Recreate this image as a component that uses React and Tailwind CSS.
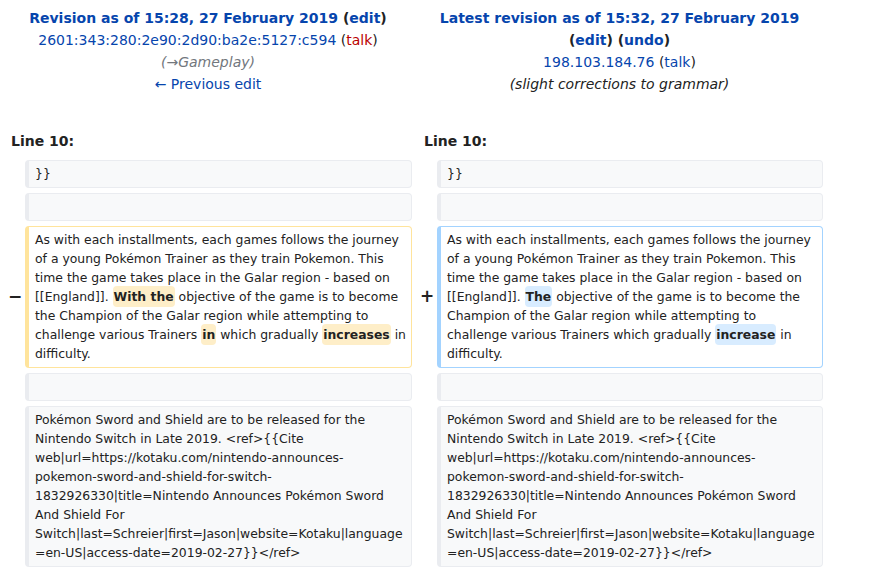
import React from 'react';

const Hl = ({ kind, children }) => (
    <span
        className={
            'font-bold rounded-[4px] px-[1px] py-[0.25em] ' +
            (kind === 'del' ? 'bg-[#feeec8]' : 'bg-[#d8ecff]')
        }
    >
        {children}
    </span>
);

const Box = ({ kind = 'ctx', lines = [] }) => {
    const tone =
        kind === 'del'
            ? 'bg-white border-[#ffe49c]'
            : kind === 'add'
            ? 'bg-white border-[#a3d3ff]'
            : 'bg-[#f8f9fa] border-[#eaecf0]';
    return (
        <div
            className={`min-h-[28px] rounded-[4px] border border-l-4 pl-[6px] pr-[2px] pt-[3px] pb-[4px] text-[12.4px] leading-[19px] text-[#222] whitespace-nowrap overflow-hidden ${tone}`}
        >
            {lines.map((line, i) => (
                <div key={i}>{line}</div>
            ))}
        </div>
    );
};

const Marker = ({ children }) => (
    <div className="flex items-center justify-center pl-[5px] text-[17px] font-bold text-[#222]">{children}</div>
);

const introLines = [
    'As with each installments, each games follows the journey',
    'of a young Pokémon Trainer as they train Pokemon. This',
    'time the game takes place in the Galar region - based on',
];

const delLines = [
    ...introLines,
    <>
        [[England]]. <Hl kind="del">With the</Hl> objective of the game is to become
    </>,
    'the Champion of the Galar region while attempting to',
    <>
        challenge various Trainers <Hl kind="del">in</Hl> which gradually <Hl kind="del">increases</Hl> in
    </>,
    'difficulty.',
];

const addLines = [
    ...introLines,
    <>
        [[England]]. <Hl kind="add">The</Hl> objective of the game is to become the
    </>,
    'Champion of the Galar region while attempting to',
    <>
        challenge various Trainers which gradually <Hl kind="add">increase</Hl> in
    </>,
    'difficulty.',
];

const citeLines = [
    'Pokémon Sword and Shield are to be released for the',
    'Nintendo Switch in Late 2019. <ref>{{Cite',
    'web|url=https://kotaku.com/nintendo-announces-',
    'pokemon-sword-and-shield-for-switch-',
    '1832926330|title=Nintendo Announces Pokémon Sword',
    'And Shield For',
    'Switch|last=Schreier|first=Jason|website=Kotaku|language',
    '=en-US|access-date=2019-02-27}}</ref>',
];

const App = () => {
    return (
        <div className="w-[874px] h-[572px] overflow-hidden bg-white font-['DejaVu_Sans',sans-serif] text-[#222]">
            <div className="grid grid-cols-[25px_387px_25px_386px] gap-y-[5px] pt-[7px]">
                {/* revision headers */}
                <div className="col-span-2 pl-[4px] mb-[30px] text-center text-[14px] leading-[22px]">
                    <div className="font-bold">
                        <a className="text-[#0645ad]">Revision as of 15:28, 27 February 2019</a>{' '}
                        (<a className="text-[#0645ad]">edit</a>)
                    </div>
                    <div>
                        <a className="text-[#0645ad]">2601:343:280:2e90:2d90:ba2e:5127:c594</a>{' '}
                        (<a className="text-[#ba0000]">talk</a>)
                    </div>
                    <div className="italic text-[#72777d]">(→Gameplay)</div>
                    <div>
                        <a className="text-[#0645ad]">← Previous edit</a>
                    </div>
                </div>
                <div className="col-span-2 pl-[4px] mb-[30px] text-center text-[14px] leading-[22px]">
                    <div className="font-bold">
                        <a className="text-[#0645ad]">Latest revision as of 15:32, 27 February 2019</a>
                    </div>
                    <div className="font-bold">
                        (<a className="text-[#0645ad]">edit</a>) (<a className="text-[#0645ad]">undo</a>)
                    </div>
                    <div>
                        <a className="text-[#0645ad]">198.103.184.76</a> (<a className="text-[#0645ad]">talk</a>)
                    </div>
                    <div className="italic text-[#222]">(slight corrections to grammar)</div>
                </div>

                {/* line numbers */}
                <div className="col-span-2 pl-[11px] mb-[3px] text-[14px] leading-[22px] font-bold">Line 10:</div>
                <div className="col-span-2 pl-[12px] mb-[3px] text-[14px] leading-[22px] font-bold">Line 10:</div>

                {/* context */}
                <div />
                <Box lines={['}}']} />
                <div />
                <Box lines={['}}']} />

                <div />
                <Box />
                <div />
                <Box />

                {/* changed paragraph */}
                <Marker>−</Marker>
                <Box kind="del" lines={delLines} />
                <Marker>+</Marker>
                <Box kind="add" lines={addLines} />

                <div />
                <Box />
                <div />
                <Box />

                <div />
                <Box lines={citeLines} />
                <div />
                <Box lines={citeLines} />
            </div>
        </div>
    );
};

export default App;
